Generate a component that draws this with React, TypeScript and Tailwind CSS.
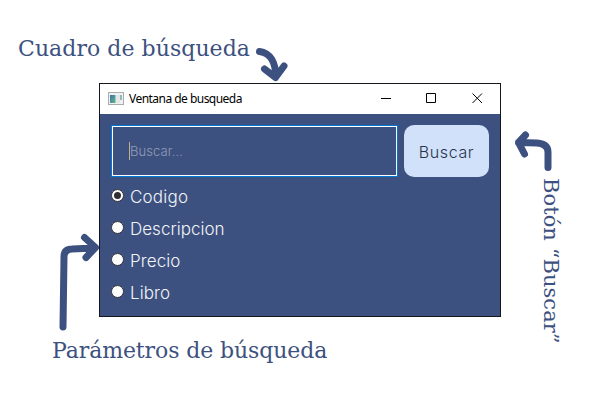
import { useState } from "react";

const options = ["Codigo", "Descripcion", "Precio", "Libro"];

const spacings = ["tracking-[0.2px]", "tracking-[0.02px]", "tracking-[0.1px]", "tracking-[0.1px]"];

function TitleBar() {
  return (
    <div className="flex h-[30px] shrink-0 items-center bg-white pl-2">
      <svg width="16" height="14" viewBox="0 0 16 14">
        <defs>
          <linearGradient id="pane" x1="0" y1="0" x2="1" y2="1">
            <stop offset="0" stopColor="#3c73a6" />
            <stop offset="1" stopColor="#62b68a" />
          </linearGradient>
        </defs>
        <rect x="0.5" y="0.5" width="15" height="12" fill="#f1f1f1" stroke="#a9abad" />
        <rect x="2" y="3" width="5.500" height="8" fill="url(#pane)" />
        <rect x="8" y="3" width="4" height="8" fill="#e4e6e8" />
        <rect x="12" y="3" width="2" height="5" fill="#8fbbb8" />
      </svg>
      <span className="ml-[5px] whitespace-nowrap font-['Noto_Sans',sans-serif] text-[12px] leading-[16px] tracking-[-0.53px] text-black">
        Ventana de busqueda
      </span>
      <svg className="ml-auto mr-[16px] mb-[2px]" width="103" height="12" viewBox="0 0 103 12" fill="none" stroke="#000" strokeWidth="1">
        <path d="M0 6.5H10M45.500 1.500H54.500V10.500H45.500Z" />
        <path d="M91.500 1.500L101 11M101 1.500L91.500 11" />
      </svg>
    </div>
  );
}

function SearchWindow() {
  const [selected, setSelected] = useState(0);
  return (
    <section className="col-start-2 row-start-2 flex flex-col border border-[#15171c] bg-[#3d5180] font-['Inter',sans-serif]">
      <TitleBar />
      <div className="flex gap-[6px] pl-[11px] pt-[11px]">
        <div className="flex h-[52px] w-[287px] items-center border border-[#0078d7]">
          <div className="flex h-full w-full items-center border border-white pl-4">
            <span className="h-[18px] w-px bg-[#c2b184]" />
            <span className="text-[13px] leading-4 font-light tracking-[0.1px] text-[#929db7]">Buscar...</span>
          </div>
        </div>
        <button className="h-[52px] w-[85px] rounded-[10px] bg-[#d1e1f9] pt-px text-[16px] font-light tracking-[0.6px] text-[#26344f]">
          Buscar
        </button>
      </div>
      <div className="flex flex-col pl-[11px] pt-1">
        {options.map((name, i) => (
          <button key={name} onClick={() => setSelected(i)} className="flex h-8 items-center text-left">
            <span className="mb-[3px] flex size-[13px] items-center justify-center rounded-full border border-[#33353b] bg-white">
              {selected === i && <span className="size-[7px] rounded-full bg-[#2d2f33]" />}
            </span>
            <span className={`ml-[6px] text-[17px] leading-5 font-light text-[#f2f4f8] ${spacings[i]}`}>{name}</span>
          </button>
        ))}
      </div>
    </section>
  );
}

export default function App() {
  return (
    <main className="grid h-[400px] w-[600px] grid-cols-[99px_402px_99px] grid-rows-[83px_234px_83px] overflow-hidden bg-white font-['DejaVu_Serif',serif] text-[#3d5180]">
      <div className="col-span-3 row-start-1 flex items-start pl-[18px] pt-[35px]">
        <h1 className="w-[235px] whitespace-nowrap text-[22px] leading-7 tracking-[0.05px]">Cuadro de búsqueda</h1>
        <svg className="mt-[9px]" width="40" height="42" viewBox="253 44 40 42" fill="none" stroke="#3d5180" strokeWidth="7" strokeLinecap="round" strokeLinejoin="round">
          <path d="M259.500 51.500C270 53 276 62 275.500 77M264.500 69L275.500 77.500L284 66" />
        </svg>
      </div>
      <svg className="col-start-1 row-start-2 overflow-visible" width="99" height="234" viewBox="0 83 99 234" fill="none" stroke="#3d5180" strokeWidth="7" strokeLinecap="round" strokeLinejoin="round">
        <path d="M63 327L64 257Q64 249 72 249L94 248M84.500 237.500L95.500 247.500L86 257.500" />
      </svg>
      <SearchWindow />
      <div className="col-start-3 row-start-2 flex flex-col items-start pl-3 pt-[46px]">
        <svg className="shrink-0" width="42" height="46" viewBox="513 129 42 46" fill="none" stroke="#3d5180" strokeWidth="7" strokeLinecap="round" strokeLinejoin="round">
          <path d="M548 167.500V152Q548 144 537 143L518.500 142.500M525.500 135L518.500 142.500L524.500 154" />
        </svg>
        <p className="ml-[24px] mt-[3px] h-[168px] shrink-0 whitespace-nowrap text-[21px] leading-7 tracking-[0.05px] [writing-mode:vertical-rl]">Botón “Buscar”</p>
      </div>
      <p className="col-span-3 row-start-3 whitespace-nowrap pl-[52px] pt-[20px] text-[22px] leading-7 tracking-[-0.1px]">Parámetros de búsqueda</p>
    </main>
  );
}
